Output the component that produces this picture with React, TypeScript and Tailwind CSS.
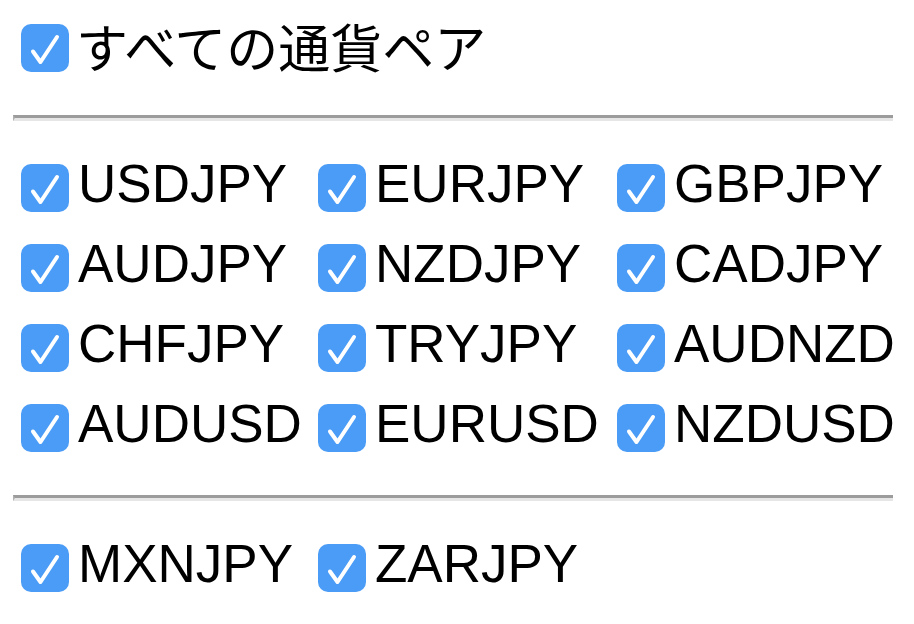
import React from "react";

const Box = () => (
  <span className="flex h-[48px] w-[48px] shrink-0 items-center justify-center rounded-[10px] bg-[#4a9cf6]">
    <svg width="48" height="48" viewBox="0 0 48 48" fill="none">
      <path d="M12 27.5 L19.5 38 L36 13" stroke="white" strokeWidth="4" strokeLinecap="round" strokeLinejoin="round" />
    </svg>
  </span>
);

const Item = ({ label }: { label: string }) => (
  <div className="flex h-[48px] items-start gap-[9px]">
    <Box />
    <span className="-mt-[7px] whitespace-nowrap text-[53px] leading-none text-black">{label}</span>
  </div>
);

const Divider = () => (
  <div className="ml-[-8px] h-[6px] w-[880px] border-l-[2px] border-t-[3px] border-b-[3px] border-l-[#b0b0b0] border-t-[#9c9c9c] border-b-[#e6e6e6] bg-[#d6d6d6]" />
);

const groupA = [
  "USDJPY", "EURJPY", "GBPJPY",
  "AUDJPY", "NZDJPY", "CADJPY",
  "CHFJPY", "TRYJPY", "AUDNZD",
  "AUDUSD", "EURUSD", "NZDUSD",
];
const groupB = ["MXNJPY", "ZARJPY"];

export default function App() {
  return (
    <div
      className="h-[624px] w-[914px] overflow-hidden bg-white pl-[21px] pt-[24px]"
      style={{ fontFamily: '"Liberation Sans", Arial, "Noto Sans CJK JP", sans-serif' }}
    >
      <div className="flex h-[48px] items-center gap-[7px]">
        <Box />
        <span className="-mt-[4px] whitespace-nowrap text-[52px] leading-none text-black" style={{ fontFamily: '"Noto Sans CJK JP", sans-serif' }}>
          すべての通貨ペア
        </span>
      </div>
      <div className="mt-[43px]">
        <Divider />
      </div>
      <div className="mt-[43px] grid grid-cols-[297px_299px_298px] gap-y-[32px]">
        {groupA.map((l) => (
          <Item key={l} label={l} />
        ))}
      </div>
      <div className="mt-[43px]">
        <Divider />
      </div>
      <div className="mt-[43px] grid grid-cols-[297px_299px_298px]">
        {groupB.map((l) => (
          <Item key={l} label={l} />
        ))}
      </div>
    </div>
  );
}
